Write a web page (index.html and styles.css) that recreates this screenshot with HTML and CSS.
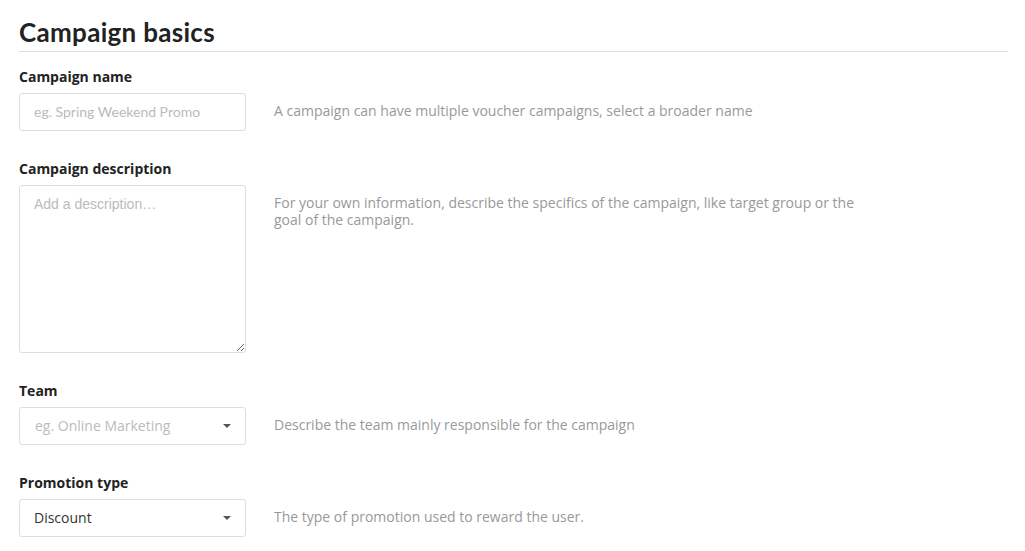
FILE: index.html
```html
<!DOCTYPE html>
<html>
<head>
<meta charset="utf-8">
<link rel="stylesheet" href="styles.css">
</head>
<body>
<div class="page">
  <h1 class="title">Campaign basics</h1>
  <div class="field">
    <label class="label">Campaign name</label>
    <div class="row">
      <input class="input name-input" type="text" placeholder="eg. Spring Weekend Promo">
      <p class="help">A campaign can have multiple voucher campaigns, select a broader name</p>
    </div>
  </div>
  <div class="field">
    <label class="label">Campaign description</label>
    <div class="row">
      <textarea class="textarea" placeholder="Add a description…"></textarea>
      <p class="help">For your own information, describe the specifics of the campaign, like target group or the goal of the campaign.</p>
    </div>
  </div>
  <div class="field">
    <label class="label">Team</label>
    <div class="row">
      <div class="select placeholder"><span>eg. Online Marketing</span><span class="caret"></span></div>
      <p class="help">Describe the team mainly responsible for the campaign</p>
    </div>
  </div>
  <div class="field">
    <label class="label">Promotion type</label>
    <div class="row">
      <div class="select"><span>Discount</span><span class="caret"></span></div>
      <p class="help">The type of promotion used to reward the user.</p>
    </div>
  </div>
</div>
</body>
</html>
```
FILE: styles.css
```css
* { box-sizing: border-box; }
html, body { margin: 0; padding: 0; background: #fff; }
body { font-family: "Open Sans", sans-serif; color: #222; }
.page { padding: 15px 17px 0 19px; }
.title {
  margin: 0;
  font-family: "Lato", sans-serif;
  font-weight: 700;
  font-size: 26px;
  line-height: 35px;
  color: #222;
  padding-bottom: 1px;
  border-bottom: 1px solid #ddd;
  letter-spacing: 0.3px;
}
.field { margin-top: 15px; }
.field + .field { margin-top: 28px; }
.label {
  display: block;
  font-weight: 700;
  font-size: 14px;
  line-height: 20px;
  color: #222;
  margin-bottom: 6px;
}
.row { display: flex; align-items: flex-start; gap: 28px; }
.input, .textarea, .select {
  width: 227px;
  flex: none;
  border: 1px solid #ddd;
  border-radius: 3px;
  background: #fff;
  margin: 0;
  outline: none;
}
.input {
  height: 38px;
  padding: 0 14px 1px;
  font-family: "Lato", sans-serif;
  font-size: 14px;
  color: #333;
}
.input::placeholder { color: #bbb; }
.textarea {
  height: 168px;
  padding: 10px 14px;
  font-family: "Liberation Sans", Arial, sans-serif;
  font-size: 14px;
  line-height: 17px;
  color: #333;
  resize: vertical;
}
.textarea::placeholder { color: #bbb; }
.select {
  height: 38px;
  padding: 0 14px 1px 14px;
  display: flex;
  align-items: center;
  justify-content: space-between;
  font-size: 14px;
  color: #333;
}
.select.placeholder { color: #bbb; }
.select.placeholder span:first-child { padding-left: 1px; }
.caret {
  width: 0; height: 0;
  border-left: 4px solid transparent;
  border-right: 4px solid transparent;
  border-top: 4px solid #555;
}
.help {
  margin: 0;
  padding-top: 9px;
  max-width: 590px;
  font-size: 14px;
  line-height: 17px;
  color: #999;
}
```
